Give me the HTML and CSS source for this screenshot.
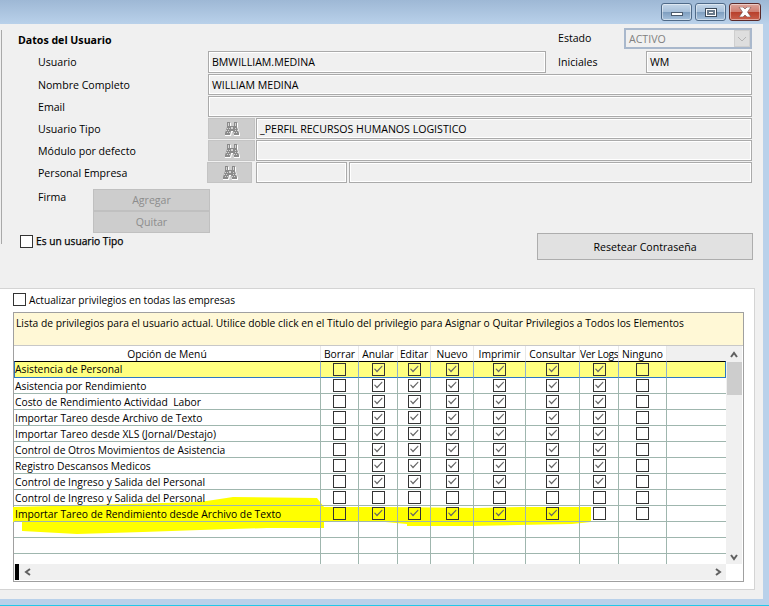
FILE: index.html
```html
<!DOCTYPE html>
<html>
<head>
<meta charset="utf-8">
<title>Datos del Usuario</title>
<link rel="stylesheet" href="styles.css">
</head>
<body>
<svg class="defs" width="0" height="0">
	<symbol id="binoculars" viewBox="0 0 16 14">
		<path fill="#fff" d="M3 1h4v4h3V1h4v5l2 6v2h-6l-1-4H8l-1 4H1v-2l2-6z"/>
		<path fill="#8a8a8a" d="M3 0h3v4h4V0h3v5l2 6v2h-5l-1-4H7l-1 4H1v-2l2-6z"/>
		<path fill="#d4d4d4" d="M4 1h1v3H4zM11 1h1v3h-1zM3 6h1v1H3zM5 6h1v1H5zM2 8h1v1H2zM4 8h1v1H4zM3 10h1v1H3zM5 10h1v1H5zM11 6h1v1h-1zM13 8h1v1h-1zM11 8h1v1h-1zM12 10h1v1h-1zM10 10h1v1h-1zM7 5h2v2H7z"/>
	</symbol>
</svg>

<div class="titlebar">
	<span class="winbtn"><i class="ico-min"></i></span>
	<span class="winbtn"><i class="ico-max"></i></span>
	<span class="winbtn close">
		<svg width="16" height="10" viewBox="0 0 16 10"><path fill="#fff" stroke="#6b4a48" stroke-width=".6" d="M2 0h4l2 2 2-2h4l-3.500 5L14 10h-4L8 8l-2 2H2l3.500-5z"/></svg>
	</span>
</div>

<div class="window">
	<div class="content">
		<div class="user-panel">
			<div class="row row-head">
				<div class="heading">Datos del Usuario</div>
				<label class="side-label">Estado</label>
				<div class="select">ACTIVO<span class="select-arrow"><svg width="10" height="6" viewBox="0 0 10 6"><path fill="none" stroke="#b4b4b4" d="M1 1l4 4 4-4"/></svg></span></div>
			</div>
			<div class="row row-first">
				<label>Usuario</label>
				<div class="field">BMWILLIAM.MEDINA</div>
				<label class="side-label side-gap">Iniciales</label>
				<div class="field field-short">WM</div>
			</div>
			<div class="row">
				<label>Nombre Completo</label>
				<div class="field">WILLIAM MEDINA</div>
			</div>
			<div class="row">
				<label>Email</label>
				<div class="field"></div>
			</div>
			<div class="row">
				<label>Usuario Tipo</label>
				<span class="search"><svg width="16" height="14"><use href="#binoculars"/></svg></span>
				<div class="field">_PERFIL RECURSOS HUMANOS LOGISTICO</div>
			</div>
			<div class="row">
				<label>Módulo por defecto</label>
				<span class="search"><svg width="16" height="14"><use href="#binoculars"/></svg></span>
				<div class="field"></div>
			</div>
			<div class="row">
				<label>Personal Empresa</label>
				<span class="search search-narrow"><svg width="16" height="14"><use href="#binoculars"/></svg></span>
				<div class="field field-code"></div>
				<div class="field"></div>
			</div>
			<div class="row row-firma">
				<label class="firma-label">Firma</label>
				<div class="firma-btns">
					<div class="btn-off">Agregar</div>
					<div class="btn-off">Quitar</div>
				</div>
			</div>
			<div class="row row-tipo">
				<span class="cb"></span>
				<span class="tipo-label">Es un usuario Tipo</span>
				<div class="btn-reset">Resetear Contraseña</div>
			</div>
		</div>

		<div class="priv-panel">
			<div class="priv-all"><span class="cb"></span><span>Actualizar privilegios en todas las empresas</span></div>
			<div class="priv-box">
				<div class="notice">Lista de privilegios para el usuario actual. Utilice doble click en el Titulo del privilegio para Asignar o Quitar Privilegios a Todos los Elementos</div>
				<div class="grid-wrap">
					<div class="grid-main">
						<div class="grid-clip">
							<table class="grid">
								<colgroup>
									<col class="c-name"><col class="c1"><col class="c2"><col class="c3"><col class="c4"><col class="c5"><col class="c6"><col class="c7"><col class="c8"><col class="c9">
								</colgroup>
								<tr>
									<th>Opción de Menú</th><th>Borrar</th><th>Anular</th><th>Editar</th><th>Nuevo</th><th>Imprimir</th><th>Consultar</th><th class="th-tight">Ver Logs</th><th>Ninguno</th><th class="th-empty"></th>
								</tr>
								<tr class="current">
									<td class="name">Asistencia de Personal</td><td><span class="cb"></span></td><td><span class="cb on"></span></td><td><span class="cb on"></span></td><td><span class="cb on"></span></td><td><span class="cb on"></span></td><td><span class="cb on"></span></td><td><span class="cb on"></span></td><td><span class="cb"></span></td><td></td>
								</tr>
								<tr>
									<td class="name">Asistencia por Rendimiento</td><td><span class="cb"></span></td><td><span class="cb on"></span></td><td><span class="cb on"></span></td><td><span class="cb on"></span></td><td><span class="cb on"></span></td><td><span class="cb on"></span></td><td><span class="cb on"></span></td><td><span class="cb"></span></td><td></td>
								</tr>
								<tr>
									<td class="name">Costo de Rendimiento Actividad&nbsp; Labor</td><td><span class="cb"></span></td><td><span class="cb on"></span></td><td><span class="cb on"></span></td><td><span class="cb on"></span></td><td><span class="cb on"></span></td><td><span class="cb on"></span></td><td><span class="cb on"></span></td><td><span class="cb"></span></td><td></td>
								</tr>
								<tr>
									<td class="name">Importar Tareo desde Archivo de Texto</td><td><span class="cb"></span></td><td><span class="cb on"></span></td><td><span class="cb on"></span></td><td><span class="cb on"></span></td><td><span class="cb on"></span></td><td><span class="cb on"></span></td><td><span class="cb on"></span></td><td><span class="cb"></span></td><td></td>
								</tr>
								<tr>
									<td class="name">Importar Tareo desde XLS (Jornal/Destajo)</td><td><span class="cb"></span></td><td><span class="cb on"></span></td><td><span class="cb on"></span></td><td><span class="cb on"></span></td><td><span class="cb on"></span></td><td><span class="cb on"></span></td><td><span class="cb on"></span></td><td><span class="cb"></span></td><td></td>
								</tr>
								<tr>
									<td class="name">Control de Otros Movimientos de Asistencia</td><td><span class="cb"></span></td><td><span class="cb on"></span></td><td><span class="cb on"></span></td><td><span class="cb on"></span></td><td><span class="cb on"></span></td><td><span class="cb on"></span></td><td><span class="cb on"></span></td><td><span class="cb"></span></td><td></td>
								</tr>
								<tr>
									<td class="name">Registro Descansos Medicos</td><td><span class="cb"></span></td><td><span class="cb on"></span></td><td><span class="cb on"></span></td><td><span class="cb on"></span></td><td><span class="cb on"></span></td><td><span class="cb on"></span></td><td><span class="cb on"></span></td><td><span class="cb"></span></td><td></td>
								</tr>
								<tr>
									<td class="name">Control de Ingreso y Salida del Personal</td><td><span class="cb"></span></td><td><span class="cb on"></span></td><td><span class="cb on"></span></td><td><span class="cb on"></span></td><td><span class="cb on"></span></td><td><span class="cb on"></span></td><td><span class="cb on"></span></td><td><span class="cb"></span></td><td></td>
								</tr>
								<tr>
									<td class="name">Control de Ingreso y Salida del Personal</td><td><span class="cb"></span></td><td><span class="cb"></span></td><td><span class="cb"></span></td><td><span class="cb"></span></td><td><span class="cb"></span></td><td><span class="cb"></span></td><td><span class="cb"></span></td><td><span class="cb"></span></td><td></td>
								</tr>
								<tr>
									<td class="name">Importar Tareo de Rendimiento desde Archivo de Texto</td><td><span class="cb"></span></td><td><span class="cb on"></span></td><td><span class="cb on"></span></td><td><span class="cb on"></span></td><td><span class="cb on"></span></td><td><span class="cb on"></span></td><td><span class="cb"></span></td><td><span class="cb"></span></td><td></td>
								</tr>
								<tr><td></td><td></td><td></td><td></td><td></td><td></td><td></td><td></td><td></td><td></td></tr>
								<tr><td></td><td></td><td></td><td></td><td></td><td></td><td></td><td></td><td></td><td></td></tr>
								<tr><td></td><td></td><td></td><td></td><td></td><td></td><td></td><td></td><td></td><td></td></tr>
							</table>
						</div>
						<div class="hscroll">
							<span class="hscroll-mark"></span>
							<svg width="8" height="8" viewBox="0 0 8 8"><path fill="none" stroke="#606060" stroke-width="2" d="M6 1L2 4l4 3"/></svg>
							<svg class="arrow-right" width="8" height="8" viewBox="0 0 8 8"><path fill="none" stroke="#606060" stroke-width="2" d="M2 1l4 3-4 3"/></svg>
						</div>
					</div>
					<div class="vscroll">
						<svg width="8" height="8" viewBox="0 0 8 8"><path fill="none" stroke="#606060" stroke-width="2" d="M1 6l3-4 3 4"/></svg>
						<div class="vscroll-thumb"></div>
						<svg class="arrow-down" width="8" height="8" viewBox="0 0 8 8"><path fill="none" stroke="#606060" stroke-width="2" d="M1 2l3 4 3-4"/></svg>
					</div>
				</div>
			</div>
		</div>

		<!-- marker strokes, sit between the white panel and the grid -->
		<svg class="marker" width="769" height="606" viewBox="0 0 769 606">
			<path fill="#ffff00" d="M13 507L200 502 233 497 317 498 324 507 385 507 477 508 522 507 591 507 591 522 572 524 518 525 470 526 407 526 407 524 385 522 324 522 324 528 267 528 200 530 143 532 77 534 22 531 22 522 13 522z"/>
		</svg>
	</div>
	<div class="frame-right"></div>
</div>
<div class="frame-bottom"></div>
</body>
</html>
```

FILE: styles.css
```css
html, body {
	margin: 0;
	padding: 0;
	height: 606px;
	overflow: hidden;
}
body {
	width: 769px;
	background: #f0f0f0;
	font-family: "Open Sans", "DejaVu Sans", sans-serif;
	font-size: 10.6px;
	color: #000;
	position: relative;
}
.defs {
	position: absolute;
}

/* window chrome */
.titlebar {
	height: 24px;
	background: linear-gradient(#9eb8d5, #b9d1ea);
	display: flex;
	justify-content: flex-end;
	align-items: flex-start;
	gap: 3px;
	padding: 3px 8px 0 0;
	box-sizing: border-box;
}
.winbtn {
	width: 31px;
	height: 18px;
	box-sizing: border-box;
	border: 1px solid #4f6a88;
	border-radius: 3px;
	background: linear-gradient(#c4d6e8 0, #a7c0da 48%, #7f9fc0 52%, #a6c1dc 100%);
	box-shadow: inset 0 0 0 1px rgba(255, 255, 255, .45);
	display: flex;
	align-items: center;
	justify-content: center;
}
.close {
	width: 32px;
	border-color: #5a2a2a;
	background: linear-gradient(#dca49a 0, #cf7f72 48%, #b8402c 52%, #c9604c 100%);
}
.ico-min {
	display: block;
	width: 12px;
	height: 4px;
	margin-top: 4px;
	border: 1px solid #4a5a6c;
	background: #fff;
	box-sizing: border-box;
}
.ico-max {
	display: block;
	width: 12px;
	height: 9px;
	border: 1px solid #3c4a5a;
	background: #fff;
	box-sizing: border-box;
	box-shadow: inset 0 0 0 1px #fff, inset 0 0 0 3px #6b7b8b;
}
.window {
	display: flex;
	height: 575px;
}
.content {
	width: 763px;
	flex: none;
}
.frame-right {
	flex: 1;
	background: #b9d1ea;
}
.frame-bottom {
	height: 7px;
	box-sizing: border-box;
	background: #b9d1ea;
	border-bottom: 1px solid #22c8e8;
}

/* user data */
.user-panel {
	height: 264px;
	box-sizing: border-box;
	padding: 4px 11px 0 0;
	background: linear-gradient(#a9a9a9, #a9a9a9) 1px 6px / 1px 214px no-repeat;
}
.row {
	display: flex;
	height: 21px;
	margin: 1px 0 0 38px;
	align-items: stretch;
}
.row label {
	width: 170px;
	flex: none;
	line-height: 22px;
}
.row-head {
	height: 21px;
	margin: 0 0 0 18px;
}
.row-head label {
	line-height: 20px;
}
.heading {
	font-weight: bold;
	width: 540px;
	line-height: 25px;
}
.row-first {
	height: 22px;
	margin-top: 2px;
}
.row .side-label {
	width: 66px;
}
.row .side-gap {
	margin-left: 12px;
	width: 88px;
}
.field {
	flex: 1;
	box-sizing: border-box;
	border: 1px solid #aaa;
	box-shadow: inset 0 0 0 1px #fff;
	background: #f0f0f0;
	padding-left: 3px;
	line-height: 20px;
	white-space: nowrap;
	overflow: hidden;
}
.row-first .field {
	line-height: 21px;
}
.field-short {
	flex: none;
	width: 106px;
}
.field-code {
	flex: none;
	width: 91px;
	margin-right: 2px;
}
.select {
	width: 128px;
	box-sizing: border-box;
	border: 2px solid #a9b8cc;
	background: #f0f0f0;
	color: #808080;
	padding-left: 3px;
	line-height: 18px;
	position: relative;
	display: flex;
	justify-content: space-between;
}
.select-arrow {
	width: 16px;
	background: #dedede;
	border: 1px solid #cfcfcf;
	box-sizing: border-box;
	display: flex;
	align-items: center;
	justify-content: center;
}
.search {
	width: 47px;
	margin-right: 1px;
	flex: none;
	background: #cdcdcd;
	border: 1px solid #c4c4c4;
	box-sizing: border-box;
	display: flex;
	align-items: center;
	justify-content: center;
}
.search-narrow {
	width: 45px;
	margin: 0 4px 0 -1px;
}
.row-firma {
	height: 44px;
	margin-top: 6px;
}
.row .firma-label {
	width: 55px;
	line-height: 16px;
}
.firma-btns {
	width: 117px;
	background: #c4c4c4;
}
.btn-off {
	height: 22px;
	box-sizing: border-box;
	background: #cdcdcd;
	border: 1px solid #c0c0c0;
	color: #8c8c8c;
	text-align: center;
	line-height: 21px;
}
.row-tipo {
	height: 27px;
	margin: 0 0 0 20px;
	align-items: flex-start;
}
.row-tipo .cb {
	margin-top: 2px;
}
.tipo-label {
	margin-left: 3px;
	line-height: 17px;
	font-size: 10.2px;
	-webkit-text-stroke: .25px #000;
}
.btn-reset {
	width: 216px;
	height: 27px;
	margin: 0 -1px 0 auto;
	box-sizing: border-box;
	background: #e1e1e1;
	border: 1px solid #adadad;
	text-align: center;
	line-height: 27px;
}

/* privileges */
.cb {
	display: inline-block;
	width: 13px;
	height: 13px;
	box-sizing: border-box;
	border: 1px solid #333;
	background: #fff;
	position: relative;
	flex: none;
	vertical-align: top;
}
.cb.on::after {
	content: "";
	position: absolute;
	inset: 0;
	background: #666;
	clip-path: polygon(1.5px 5px, 2.5px 4.500px, 4.500px 6.500px, 9.500px 1.500px, 10px 2.500px, 4.500px 8.500px);
}
.priv-panel {
	width: 755px;
	height: 302px;
	box-sizing: border-box;
	background: #fff;
	border: 1px solid #d4d4d4;
	border-left: 0;
	padding: 4px 10px 0 13px;
}
.priv-all {
	display: flex;
	gap: 3px;
	line-height: 14px;
	height: 19px;
	font-size: 10.2px;
}
.priv-box {
	width: 731px;
	height: 270px;
	box-sizing: border-box;
	border: 1px solid #a0a0a0;
	font-size: 10.3px;
}
.notice {
	height: 33px;
	box-sizing: border-box;
	background: #fff8d6;
	border-bottom: 1px solid #c8c8c8;
	padding: 3px 0 0 2px;
	line-height: 15px;
	white-space: nowrap;
}
.grid-wrap {
	display: flex;
}
.grid-main {
	width: 712px;
	flex: none;
}
.grid-clip {
	height: 218px;
	overflow: hidden;
}
.grid {
	table-layout: fixed;
	border-spacing: 0;
	width: 712px;
	position: relative;
	z-index: 1;
}
.grid .cb {
	background: transparent;
}
.c-name { width: 307px; }
.c1 { width: 38px; }
.c2 { width: 39px; }
.c3 { width: 33px; }
.c4 { width: 43px; }
.c5 { width: 52px; }
.c6 { width: 54px; }
.c7 { width: 39px; }
.c8 { width: 48px; }
.c9 { width: 59px; }
.grid th {
	height: 15px;
	padding: 0;
	font-weight: normal;
	background: #fff;
	border-right: 1px solid #e8e8e8;
	box-sizing: border-box;
	line-height: 14px;
	white-space: nowrap;
	overflow: hidden;
}
.grid .th-tight {
	letter-spacing: -.3px;
}
.grid .th-empty {
	background: #f0f0f0;
	border-right: 0;
}
.grid td {
	height: 16px;
	padding: 0;
	box-sizing: border-box;
	border-right: 1px solid #9fb6ae;
	border-bottom: 1px solid #9fb6ae;
	text-align: center;
	line-height: 13px;
}
.grid td:last-child {
	border-right: 0;
}
.grid td.name {
	text-align: left;
	padding: 1px 0 0 1px;
	white-space: nowrap;
}
.current td {
	height: 17px;
	background: #ffff80;
	border-top: 1px solid #000;
	border-right-color: #8fb0d0;
	border-bottom-color: #2b78c4;
}
.grid .current td.name {
	border-left: 1px solid #2b78c4;
	padding: 0;
}
.grid .current td:last-child {
	border-right: 1px solid #2b78c4;
}
.hscroll {
	height: 16px;
	background: #f0f0f0;
	display: flex;
	align-items: center;
	gap: 5px;
	padding-left: 1px;
}
.hscroll-mark {
	width: 4px;
	height: 16px;
	background: #000;
}
.arrow-right {
	margin-left: auto;
	margin-right: 4px;
}
.vscroll {
	width: 16px;
	height: 218px;
	background: #f0f0f0;
	display: flex;
	flex-direction: column;
	align-items: center;
	padding-top: 5px;
	box-sizing: border-box;
}
.vscroll-thumb {
	width: 15px;
	height: 33px;
	margin-top: 3px;
	background: #cdcdcd;
}
.arrow-down {
	margin-top: auto;
	margin-bottom: 3px;
}
.marker {
	position: absolute;
	left: 0;
	top: 0;
	z-index: 0;
	pointer-events: none;
}
```
